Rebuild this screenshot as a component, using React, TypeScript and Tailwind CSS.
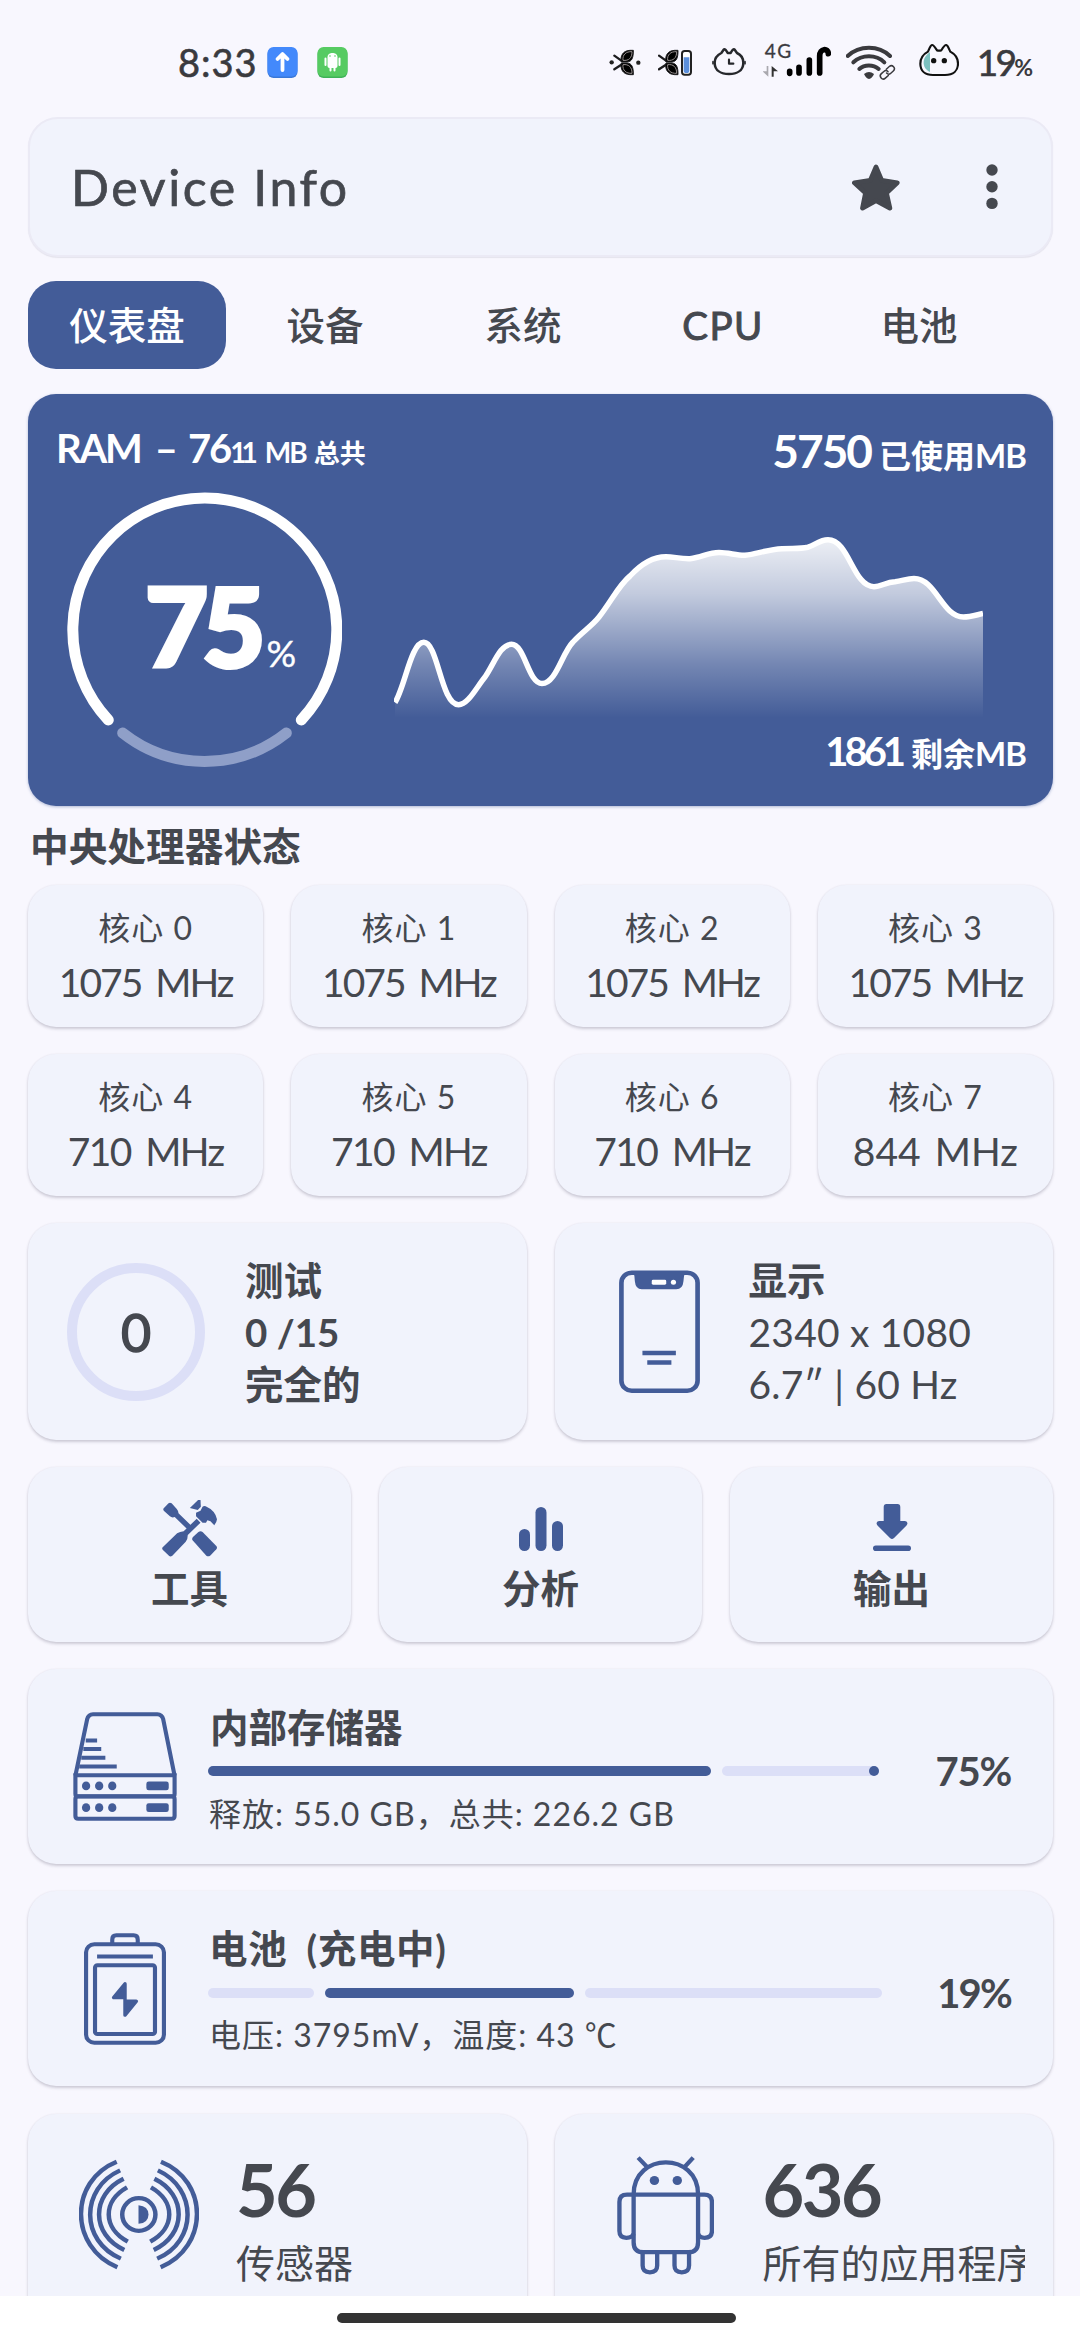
import React from "react";

const BLUE = "#435c98";

/* ---------- status bar ---------- */

function Twig() {
  return (
    <g fill="none">
      <path d="M157 107 L178 122 M157 148 L178 134" stroke="#1c1c1e" strokeWidth="7" strokeLinecap="round" />
      <path d="M214 91 H204 C184 92 174 106 178 126 H196 C210 124 214 114 214 91Z" fill="#000" stroke="#1c1c1e" strokeWidth="3" />
      <path d="M214 164 H204 C184 163 174 149 178 129 H196 C210 131 214 141 214 164Z" fill="#000" stroke="#1c1c1e" strokeWidth="3" />
      <path d="M210 95 C192 94 181 104 183 121 C200 123 210 114 210 95Z" stroke="#979090" strokeWidth="3" />
      <path d="M210 160 C192 161 181 151 183 134 C200 132 210 141 210 160Z" stroke="#979090" strokeWidth="3" />
    </g>
  );
}

function StatusBar() {
  return (
    <div className="h-[117px] shrink-0 pt-10">
      <div className="flex h-11 items-center pl-[178px] pr-[47px] text-[#3a3a3e]">
        <span className="text-[38px] leading-[44px] tracking-[1px] [-webkit-text-stroke:0.6px_#3a3a3e]">8:33</span>
        <svg className="ml-[9px] h-11 w-[31px]" viewBox="0 0 31 44">
          <rect x="0.5" y="8" width="30" height="30" rx="6" fill="#3a78d8" />
          <rect x="0.5" y="7" width="30" height="29.5" rx="6" fill="#4389fb" />
          <path d="M15.500 30 V15 M10.500 19 L15.500 14 L20.500 19" fill="none" stroke="#fff" strokeWidth="3.800" strokeLinecap="round" strokeLinejoin="round" />
        </svg>
        <svg className="ml-[19px] h-11 w-[31px]" viewBox="0 0 31 44">
          <rect x="0.5" y="8" width="30" height="30" rx="6" fill="#3eb257" />
          <rect x="0.5" y="7" width="30" height="29.500" rx="6" fill="#56cb62" />
          <path d="M10.500 17 C10.500 11.500 20.500 11.500 20.500 17 V26 Q20.500 28 18.500 28 H12.500 Q10.500 28 10.500 26Z" fill="#fff" />
          <path d="M8.500 18.500 V25 M22.500 18.500 V25 M13.500 27 V30.500 M17.500 27 V30.500" stroke="#fff" strokeWidth="2" strokeLinecap="round" />
          <circle cx="13" cy="16" r="0.800" fill="#56cb62" />
          <circle cx="18" cy="16" r="0.800" fill="#56cb62" />
        </svg>

        <svg className="ml-auto h-11 w-[32px]" viewBox="141 60 96 132">
          <circle cx="149" cy="127" r="6.500" fill="#222" />
          <circle cx="229" cy="128" r="6.500" fill="#222" />
          <Twig />
        </svg>
        <svg className="ml-[17px] h-11 w-[34px]" viewBox="288 60 102 132">
          <g transform="translate(134 0)">
            <Twig />
          </g>
          <rect x="360" y="93" width="27" height="71" rx="8" fill="#fff" stroke="#222" strokeWidth="6" />
          <path d="M365 112 H382 V152 Q382 159 373.500 159 Q365 159 365 152Z" fill="#5b8fdc" />
        </svg>
        <svg className="ml-[20px] h-11 w-[34px]" viewBox="450 60 102 132" fill="none" stroke="#26282c" strokeLinecap="round" strokeLinejoin="round">
          <path d="M458 128 C458 115 468 104 478 99 L486 88 Q490 86 497 99 H506 Q513 86 517 88 L525 99 C536 104 544 115 544 128 C544 152 524 162 501 162 C478 162 458 152 458 128Z" strokeWidth="7.500" />
          <path d="M453 125 V131 M549 125 V131" strokeWidth="5" />
          <path d="M501 119 V131 H514" strokeWidth="6.500" />
        </svg>
        <div className="relative ml-[17px] h-11 w-[68px]">
          <span className="absolute left-[2px] top-[1px] text-[19px] leading-[20px] tracking-[1.500px] [-webkit-text-stroke:0.3px_#3a3a3e]">4G</span>
          <svg className="h-11 w-[68px]" viewBox="603 60 204 132" fill="none" stroke="#000" strokeLinecap="round">
            <path d="M683 154 V160 M711 142 V159 M742 120 V159" strokeWidth="17" />
            <path d="M773 159 V108 C773 84 799 84 799 101" strokeWidth="17" />
            <path d="M614 138 H619 V170 L602 154 H614Z" fill="#a9a8ae" stroke="none" />
            <path d="M629 170 V138 L648 154 H635 V170Z" fill="#333" stroke="none" />
          </svg>
        </div>
        <svg className="ml-[15px] h-11 w-[50px]" viewBox="852 60 150 132" fill="none" stroke="#3a3a3e" strokeLinecap="round">
          <path d="M857 108 C892 75 950 75 984 108" strokeWidth="12" />
          <path d="M874 127 C900 103 942 103 967 127" strokeWidth="12" />
          <path d="M892 147 C907 133 934 133 950 147" strokeWidth="12" />
          <path d="M906 162 Q921 150 936 162 Q930 175 921 177 Q912 175 906 162Z" fill="#3a3a3e" stroke="none" />
          <g transform="rotate(-42 976 157)" strokeWidth="9" stroke="#f8f7fe">
            <rect x="951" y="148" width="28" height="18" rx="9" />
            <rect x="973" y="148" width="28" height="18" rx="9" />
          </g>
          <g transform="rotate(-42 976 157)" strokeWidth="4.500">
            <path d="M972 166 H960 A9 9 0 0 1 960 148 H970 A9 9 0 0 1 979 157" />
            <path d="M980 148 H992 A9 9 0 0 1 992 166 H982 A9 9 0 0 1 973 157" />
          </g>
        </svg>
        <svg className="ml-[23px] h-11 w-[40px]" viewBox="1070 60 120 132" fill="none" stroke="#111" strokeLinejoin="round">
          <path d="M1103 97 C1077 112 1078 146 1103 156Z" fill="#7cc0bf" stroke="none" />
          <path d="M1074 131 C1074 113 1084 102 1097 95 C1101 86 1104 76 1109 75 C1114 74 1120 85 1124 91 C1128 92 1132 92 1137 91 C1141 84 1147 74 1152 75 C1157 76 1160 88 1164 95 C1177 102 1187 114 1187 131 C1187 152 1173 165 1148 165 H1112 C1088 165 1074 152 1074 131Z" strokeWidth="6.500" />
          <circle cx="1114" cy="122" r="8" fill="#111" stroke="none" />
          <circle cx="1146" cy="122" r="8" fill="#111" stroke="none" />
        </svg>
        <span className="ml-[18px] text-[37px] leading-[44px] tracking-[-2.800px] [-webkit-text-stroke:0.6px_#3a3a3e]">19</span>
        <span className="mt-[10px] text-[23px] font-bold leading-[24px]">%</span>
      </div>
    </div>
  );
}

/* ---------- shared card ---------- */

function Card({ className, children }: { className: string; children: React.ReactNode }) {
  return (
    <div className={"rounded-[28px] bg-[#f1f3fc] shadow-[0_2px_3px_rgba(60,55,80,0.22),0_0_2px_rgba(60,55,80,0.08)] " + className}>
      {children}
    </div>
  );
}

/* ---------- memory chart ---------- */

const line =
  "M395 702.500 C405 687 411 642.300 423.800 642.300 C438 642.300 441 704.700 458.600 704.700 " +
  "C468 704.700 476 688 485 677 C494 664 500 644.300 511.500 644.300 C525 644.300 528 683.500 542 683.500 " +
  "C556 683.500 562 653 573 642 C583 631 591 627 599 617 C612 600 619 585 630 576 C641 564 652 556.700 666 556.700 " +
  "C674 556.700 680 559 690 558.700 C702 557.500 708 552.500 719 552.500 C729 552.500 736 555.500 745 555.300 " +
  "C757 554 768 549.300 782 548.700 C793 548 799 549 808 547.200 C815 545 820 539.700 828 539.700 " +
  "C849 539.700 853 586.700 874 586.700 C881 586.700 886 582 895 581.700 C902 581 907 578.500 914 578.500 " +
  "C936 578.500 942 617 963.500 617 C970 617 976 615 983 613.500";

function RamCard() {
  return (
    <div className="mt-[25px] flex h-[412px] flex-col rounded-[28px] bg-[#435c98] pt-[33px] text-white shadow-[0_1px_3px_rgba(67,92,152,0.4)]">
      <div className="flex h-[46px] items-start justify-between pl-[28px] pr-[27px]">
        <div className="flex items-baseline whitespace-pre text-[40px] font-bold leading-[42px]">
          <span className="tracking-[-2.200px]">RAM</span>
          <span className="ml-[14px]">–</span>
          <span className="ml-[10px] tracking-[-2px]">76</span>
          <span className="text-[28px] tracking-[-5px]">11</span>
          <span className="ml-[12px] text-[28px] tracking-[-2px]">MB</span>
          <span className="ml-[8px] text-[26px]">总共</span>
        </div>
        <div className="flex items-baseline whitespace-pre text-[46px] font-bold leading-[47px]">
          <span className="tracking-[-2px]">5750</span>
          <span className="ml-[8px] text-[32px]">已使用</span>
          <span className="text-[33px] tracking-[-1px]">MB</span>
        </div>
      </div>
      <div className="flex">
        <div className="relative ml-[39px] mt-[19px] h-[275px] w-[275px]">
          <svg className="h-[275px] w-[275px]" viewBox="67 492 275 275" fill="none" strokeWidth="11" strokeLinecap="round">
            <path d="M108.300 720 A132 132 0 1 1 301.300 720" stroke="#fff" />
            <path d="M122.700 733 A132 132 0 0 0 286.300 733" stroke="#8f9fc8" />
          </svg>
          <div className="absolute left-[78px] top-[78px] flex items-baseline leading-[109px]">
            <span className="text-[109px] font-black tracking-[-6px] [-webkit-text-stroke:4px_#fff]">75</span>
            <span className="ml-[7px] text-[37px] leading-[37px] [-webkit-text-stroke:0.4px_#fff]">%</span>
          </div>
        </div>
        <div className="flex flex-1 flex-col pr-[27px]">
          <svg className="ml-[52px] mt-[57px] h-[190px] w-[589px]" viewBox="394 530 589 190">
            <defs>
              <linearGradient id="fade" x1="0" y1="540" x2="0" y2="718" gradientUnits="userSpaceOnUse">
                <stop offset="0" stopColor="#fff" stopOpacity="0.900" />
                <stop offset="0.300" stopColor="#fff" stopOpacity="0.680" />
                <stop offset="0.700" stopColor="#fff" stopOpacity="0.260" />
                <stop offset="1" stopColor="#fff" stopOpacity="0" />
              </linearGradient>
            </defs>
            <path d={line + " V720 H395Z"} fill="url(#fade)" />
            <path d={line} fill="none" stroke="#fff" strokeWidth="5.500" />
          </svg>
          <div className="mt-[11px] flex items-baseline justify-end whitespace-pre text-[40px] font-bold leading-[40px]">
            <span className="tracking-[-4px]">1861</span>
            <span className="ml-[9px] text-[32px]">剩余</span>
            <span className="text-[33px] tracking-[-1px]">MB</span>
          </div>
        </div>
      </div>
    </div>
  );
}

/* ---------- icons ---------- */

function PhoneIcon() {
  return (
    <svg className="ml-[64px] h-[123px] w-[81px]" viewBox="224 211 235 369" preserveAspectRatio="none" fill="none">
      <rect x="231" y="219" width="221" height="354" rx="30" stroke={BLUE} strokeWidth="13.500" />
      <path d="M266 219 H416 Q411 228 411 245 Q409 269 390 269 H290 Q272 269 270 245 Q270 228 266 219Z" fill={BLUE} />
      <rect x="319" y="240" width="42" height="15" rx="4" fill="#fff" />
      <circle cx="382" cy="247.500" r="7.500" fill="#fff" />
      <path d="M292 460 H389 M306 488.500 H376" stroke={BLUE} strokeWidth="14" />
    </svg>
  );
}

function ToolsIcon() {
  return (
    <svg className="h-[57px] w-[55px]" viewBox="468 900 160 171" preserveAspectRatio="none" fill={BLUE}>
      <path d="M473 925 L487 910 Q491 906 496 910 L511 927 Q516 933 516 940 L552 976 L541 987 L505 951 Q497 954 491 949 L474 933 Q470 929 473 925Z" />
      <path d="M557 1021 Q554 1016 558 1011 L574 996 Q580 992 586 996 L626 1038 Q630 1043 626 1048 L608 1067 Q602 1071 597 1067Z" />
      <path d="M470 1042 L512 1000 Q520 995 531 994 L569 956 L580 968 L543 1005 Q543 1018 537 1025 L498 1067 Q493 1071 489 1068 L470 1049 Q467 1045 470 1042Z" />
      <path d="M567 938 L580 932 L586 920 Q590 917 595 919 Q623 932 628 958 Q627 968 620 976 L609 964 L600 961 L596 968 L586 968 L567 949Z" />
      <path d="M549 924 L573 900 L580 900 L581 920 L572 930Z" />
    </svg>
  );
}

function BarsIcon() {
  return (
    <svg className="h-[57px] w-[44px]" viewBox="518 1500 44 57" fill={BLUE}>
      <rect x="518" y="1529" width="11" height="22" rx="5.500" />
      <rect x="534.500" y="1507" width="11" height="44" rx="5.500" />
      <rect x="551" y="1521" width="11" height="30" rx="5.500" />
    </svg>
  );
}

function DownloadIcon() {
  return (
    <svg className="h-[57px] w-[38px]" viewBox="871 1500 38 57" fill={BLUE}>
      <path d="M884.500 1504 H895.500 Q898.300 1504 898.300 1507 V1521 H903 Q907 1522 904.500 1525.500 L892 1538 Q890 1540 888 1538 L875.500 1525.500 Q873 1522 877 1521 H881.700 V1507 Q881.700 1504 884.500 1504Z" />
      <rect x="871" y="1545.500" width="38" height="5.600" rx="2.800" />
    </svg>
  );
}

function DiskIcon() {
  return (
    <svg className="h-[109px] w-[104px]" viewBox="212 188 302 326" preserveAspectRatio="none" fill="none" stroke={BLUE} strokeWidth="12">
      <path d="M219 378 L253 210 Q257 195 270 195 H457 Q470 195 474 210 L507 378" />
      <path d="M249 273 H282 M242 299 H294 M236 325 H306 M230 351 H339" />
      <path d="M219 377 H507 V433 Q507 440 500 440 H226 Q219 440 219 433Z" />
      <path d="M226 441 H500 Q507 441 507 448 V499 Q507 507 499 507 H227 Q219 507 219 499 V448 Q219 441 226 441Z" />
      {[409, 474].map((y) => (
        <g key={y} fill={BLUE} stroke="none">
          <ellipse cx="250" cy={y} rx="12" ry="13" />
          <ellipse cx="288" cy={y} rx="12" ry="13" />
          <ellipse cx="326" cy={y} rx="12" ry="13" />
          <rect x="425" y={y - 13} width="65" height="26" rx="7" />
        </g>
      ))}
    </svg>
  );
}

function BatteryIcon() {
  return (
    <svg className="mx-[11px] h-[112px] w-[82px]" viewBox="244 848 238 338" preserveAspectRatio="none" fill="none" stroke={BLUE} strokeWidth="12">
      <rect x="250" y="882" width="226" height="297" rx="24" />
      <path d="M326 882 V868 Q326 855 338 855 H388 Q400 855 400 868 V882" />
      <path d="M282 919 H444" />
      <rect x="276" y="945" width="174" height="208" rx="7" />
      <path d="M363 1001 L330 1043 H363 V1096 L396 1054 H363Z" fill={BLUE} strokeWidth="10" strokeLinejoin="round" />
    </svg>
  );
}

function SensorIcon() {
  const arcs = [
    "M338 217 C200 275 200 472 340 533",
    "M348 243 C232 297 232 455 350 507",
    "M358 268 C263 315 263 435 360 481",
    "M368 294 C297 335 297 415 370 456",
    "M466 217 C605 275 605 472 465 533",
    "M457 243 C572 297 572 455 455 507",
    "M447 268 C541 315 541 435 445 481",
    "M437 294 C508 335 508 415 435 456",
  ];
  return (
    <svg className="h-[111px] w-[120px]" viewBox="229 209 347 332" preserveAspectRatio="none" fill="none" stroke={BLUE} strokeWidth="13">
      {arcs.map((d) => (
        <path key={d} d={d} />
      ))}
      <ellipse cx="402" cy="375" rx="48" ry="49" />
      <path d="M401 347 Q430 350 430 375 Q430 400 401 403Z" fill={BLUE} stroke="none" />
    </svg>
  );
}

function AndroidIcon() {
  return (
    <svg className="h-[119px] w-[97px]" viewBox="221 198 280 355" preserveAspectRatio="none" fill="none" stroke={BLUE} strokeWidth="12.500">
      <path d="M269 313 C269 185 455 185 455 313 V455 Q455 485 427 485 H297 Q269 485 269 455Z" />
      <path d="M269 313 H455" />
      <path d="M282 203 L311 234 M441 203 L413 234" />
      <path d="M269 313 H250 Q228 313 228 335 V422 Q228 442 248 442 Q265 442 269 430 M455 313 H473 Q495 313 495 335 V422 Q495 442 474 442 Q459 442 455 430" />
      <path d="M295 485 V525 Q295 545 316 545 Q337 545 337 525 V485 M387 485 V525 Q387 545 408 545 Q429 545 429 525 V485" />
      <circle cx="329" cy="271" r="13.500" fill={BLUE} stroke="none" />
      <circle cx="395" cy="271" r="13.500" fill={BLUE} stroke="none" />
    </svg>
  );
}

/* ---------- data ---------- */

const cores = [
  { n: 0, f: "1075 MHz", c: "tracking-[-2px] [word-spacing:6px]" },
  { n: 1, f: "1075 MHz", c: "tracking-[-2px] [word-spacing:6px]" },
  { n: 2, f: "1075 MHz", c: "tracking-[-2px] [word-spacing:6px]" },
  { n: 3, f: "1075 MHz", c: "tracking-[-2px] [word-spacing:6px]" },
  { n: 4, f: "710 MHz", c: "tracking-[-1.600px] [word-spacing:6px]" },
  { n: 5, f: "710 MHz", c: "tracking-[-1.600px] [word-spacing:6px]" },
  { n: 6, f: "710 MHz", c: "tracking-[-1.600px] [word-spacing:6px]" },
  { n: 7, f: "844 MHz", c: "[word-spacing:4px]" },
];

const tabs = ["仪表盘", "设备", "系统", "CPU", "电池"];

const tools = [
  { label: "工具", icon: <ToolsIcon /> },
  { label: "分析", icon: <BarsIcon /> },
  { label: "输出", icon: <DownloadIcon /> },
];

export default function App() {
  return (
    <div className="flex h-[2340px] w-[1080px] flex-col overflow-hidden bg-[#f8f7fe] font-['Lato','Noto_Sans_CJK_SC',sans-serif] text-[#45484f]">
      <StatusBar />
      <div className="flex min-h-0 flex-1 flex-col overflow-hidden pl-[28px] pr-[27px]">
        <header className="flex h-[140px] shrink-0 items-center rounded-[30px] border-2 border-[#ebeaf5] bg-[#f1f3fc] pl-[41px] pr-[53px] shadow-[0_1px_1px_rgba(60,55,80,0.1)]">
          <h1 className="text-[50px] leading-[60px] tracking-[2.600px] [-webkit-text-stroke:0.7px_#45484f]">Device Info</h1>
          <svg className="ml-auto h-[47px] w-[48px]" viewBox="874 430 142 138">
            <path
              d="M945 438 L962 478 L1008 485 L976 515 L986 560 L945 538 L905 560 L914 515 L881 485 L928 478Z"
              fill="#45484f"
              stroke="#45484f"
              strokeWidth="14"
              strokeLinejoin="round"
            />
          </svg>
          <svg className="ml-[86px] h-[46px] w-[12px]" viewBox="0 0 12 46" fill="#45484f">
            <circle cx="6" cy="6" r="5.700" />
            <circle cx="6" cy="22.700" r="5.700" />
            <circle cx="6" cy="39.400" r="5.700" />
          </svg>
        </header>

        <nav className="mt-[24px] flex h-[88px] shrink-0">
          {tabs.map((t, i) => (
            <div
              key={t}
              className={
                "flex h-[88px] w-[198px] items-center justify-center rounded-[28px] text-[38.500px] leading-[44px] " +
                (i === 0 ? "bg-[#435c98] text-white" : "") +
                (t === "CPU" ? " pl-[4px] tracking-[1.500px] [-webkit-text-stroke:1px_#45484f]" : " font-medium")
              }
            >
              {t}
            </div>
          ))}
        </nav>

        <div className="shrink-0">
          <RamCard />
        </div>

        <h2 className="flex h-[79px] shrink-0 items-center pl-[2px] pt-[2px] text-[38.700px] font-bold">中央处理器状态</h2>

        <div className="grid shrink-0 grid-cols-4 gap-x-[28px] gap-y-[27px]">
          {cores.map((c) => (
            <Card key={c.n} className="h-[142px] pt-[21px] text-center">
              <div className="text-[32px] leading-[44px] tracking-[1px]">核心 {c.n}</div>
              <div className={"mt-2 text-[39px] leading-[48px] " + c.c}>{c.f}</div>
            </Card>
          ))}
        </div>

        <div className="mt-[27px] grid shrink-0 grid-cols-2 gap-[28px]">
          <Card className="flex h-[217px] items-center pl-[39px]">
            <div className="flex h-[138px] w-[138px] items-center justify-center rounded-full border-[10px] border-[#dcdff7] text-[52px] [-webkit-text-stroke:1.500px_#45484f]">
              0
            </div>
            <div className="ml-[40px] text-[38.500px] font-bold leading-[52px]">
              <div>测试</div>
              <div>0 /15</div>
              <div>完全的</div>
            </div>
          </Card>
          <Card className="flex h-[217px] items-center">
            <PhoneIcon />
            <div className="ml-[49px] text-[39px] leading-[52px]">
              <div className="text-[38.500px] font-bold">显示</div>
              <div className="tracking-[0.200px]">2340 x 1080</div>
              <div className="tracking-[0.200px]">6.7″ | 60 Hz</div>
            </div>
          </Card>
        </div>

        <div className="mt-[27px] grid shrink-0 grid-cols-3 gap-[28px]">
          {tools.map((t) => (
            <Card key={t.label} className="flex h-[175px] flex-col items-center pt-[33px]">
              {t.icon}
              <div className="mt-[9px] text-[38.500px] font-bold leading-[44px]">{t.label}</div>
            </Card>
          ))}
        </div>

        <Card className="mt-[27px] flex h-[195px] shrink-0 pl-[45px] pr-[42px]">
          <div className="flex w-[104px] items-start pt-[43px]">
            <DiskIcon />
          </div>
          <div className="ml-[31px] w-[674px] pt-[36px]">
            <div className="pl-[2px] text-[38.500px] font-bold leading-[44px]">内部存储器</div>
            <div className="mt-[17px] flex h-[10px] gap-[11px]">
              <div className="w-[503px] rounded-full bg-[#435c98]" />
              <div className="flex w-[157px] justify-end rounded-full bg-[#dcdff7]">
                <div className="w-[10px] rounded-full bg-[#435c98]" />
              </div>
            </div>
            <div className="mt-[18px] whitespace-nowrap pl-[1px] text-[32px] leading-[40px] tracking-[1px]">
              释放: 55.0 GB，总共: 226.2 GB
            </div>
          </div>
          <div className="ml-auto pt-[78px] text-[40px] font-bold leading-[48px] tracking-[-1.200px]">75%</div>
        </Card>

        <Card className="mt-[27px] flex h-[195px] shrink-0 pl-[45px] pr-[42px]">
          <div className="flex w-[104px] items-start pt-[42px]">
            <BatteryIcon />
          </div>
          <div className="ml-[31px] w-[674px] pt-[35px]">
            <div className="whitespace-nowrap pl-[1px] text-[38.500px] font-bold leading-[44px] tracking-[0.700px] [word-spacing:9px]">
              电池 (充电中)
            </div>
            <div className="mt-[18px] flex h-[10px] gap-[11px]">
              <div className="w-[106px] rounded-full bg-[#dcdff7]" />
              <div className="w-[249px] rounded-full bg-[#435c98]" />
              <div className="w-[297px] rounded-full bg-[#dcdff7]" />
            </div>
            <div className="mt-[17px] whitespace-nowrap pl-[1px] text-[32px] leading-[40px] tracking-[1px]">
              电压: 3795mV，温度: 43 ℃
            </div>
          </div>
          <div className="ml-auto pt-[78px] text-[40px] font-bold leading-[48px] tracking-[-1.800px]">19%</div>
        </Card>

        <div className="mt-[28px] grid shrink-0 grid-cols-2 gap-[28px]">
          <Card className="flex h-[217px] pl-[51px] pr-[28px]">
            <div className="pt-[45px]">
              <SensorIcon />
            </div>
            <div className="ml-[37px] min-w-0 flex-1 overflow-hidden pt-[39px]">
              <div className="text-[72px] font-bold leading-[72px] tracking-[-2.500px]">56</div>
              <div className="mt-[14px] whitespace-nowrap text-[39px] leading-[48px]">传感器</div>
            </div>
          </Card>
          <Card className="flex h-[217px] pl-[62px] pr-[28px]">
            <div className="pt-[42px]">
              <AndroidIcon />
            </div>
            <div className="ml-[49px] min-w-0 flex-1 overflow-hidden pt-[39px]">
              <div className="text-[72px] font-bold leading-[72px] tracking-[-2.500px]">636</div>
              <div className="mt-[14px] whitespace-nowrap text-[39px] leading-[48px]">所有的应用程序</div>
            </div>
          </Card>
        </div>
      </div>
      <div className="flex h-[44px] shrink-0 justify-center bg-white pr-[7px] pt-[17px]">
        <div className="h-[10px] w-[399px] rounded-full bg-[#333333]" />
      </div>
    </div>
  );
}
